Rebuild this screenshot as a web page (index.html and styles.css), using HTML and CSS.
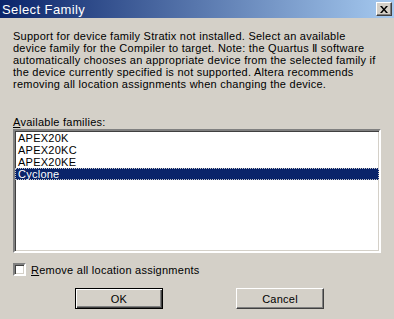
FILE: index.html
```html
<!DOCTYPE html>
<html lang="en">
<head>
    <meta charset="UTF-8">
    <title>Select Family</title>
    <link rel="stylesheet" href="styles.css">
</head>
<body>

    <div class="titlebar">
        <span class="title">Select Family</span>
        <button class="close-btn" aria-label="Close">
            <svg width="8" height="7" viewBox="0 0 8 7">
                <path d="M0 0h2l2 2.5L6 0h2L5 3.5 8 7H6L4 4.5 2 7H0l3-3.5z" fill="#000"/>
            </svg>
        </button>
    </div>

    <div class="content">
        <p class="message">Support for device family Stratix not installed. Select an available device family for the Compiler to target. Note: the Quartus &#8545; software automatically chooses an appropriate device from the selected family if the device currently specified is not supported. Altera recommends removing all location assignments when changing the device.</p>

        <div class="label"><u>A</u>vailable families:</div>
        <ul class="listbox">
            <li>APEX20K</li>
            <li>APEX20KC</li>
            <li>APEX20KE</li>
            <li class="selected"><span>Cyclone</span></li>
        </ul>

        <label class="check-row">
            <span class="checkbox"></span>
            <span><u>R</u>emove all location assignments</span>
        </label>

        <div class="buttons">
            <button class="btn default">OK</button>
            <button class="btn">Cancel</button>
        </div>
    </div>

</body>
</html>
```

FILE: styles.css
```css
/* General Styles */
body, html {
    margin: 0;
    padding: 0;
    background-color: #d4d0c8;
    font-family: "Liberation Sans", Arial, sans-serif;
    font-size: 11px;
    letter-spacing: 0.25px;
    color: #000;
}

/* Title bar */
.titlebar {
    height: 18px;
    display: flex;
    align-items: center;
    justify-content: space-between;
    padding: 0 2px 0 2px;
    background: linear-gradient(to right, #0a246a, #a6caf0);
    color: #fff;
}

.title {
    font-size: 13px;
    letter-spacing: 0.4px;
}

.close-btn {
    width: 16px;
    height: 14px;
    padding: 0;
    display: flex;
    align-items: center;
    justify-content: center;
    background-color: #d4d0c8;
    border: 1px solid;
    border-color: #fff #404040 #404040 #fff;
    box-shadow: inset -1px -1px 0 #808080;
}

/* Content */
.content {
    padding: 0 13px;
}

.message {
    margin: 12px 0 0 0;
    line-height: 12px;
}

.label {
    margin-top: 26px;
    line-height: 12px;
    height: 12px;
}

.listbox {
    list-style: none;
    margin: 1px 0 0 0;
    padding: 0;
    height: 120px;
    background-color: #fff;
    border: 2px solid;
    border-color: #808080 #fff #fff #808080;
    box-shadow: inset 1px 1px 0 #404040, inset -1px -1px 0 #d4d0c8;
}

.listbox li {
    height: 12px;
    line-height: 12px;
    padding-left: 3px;
}

.listbox li:first-child {
    margin-top: 1px;
}

.listbox .selected {
    background-color: #0a246a;
    color: #fff;
    outline: 1px dotted #c8c8c8;
    outline-offset: -1px;
}

/* Checkbox */
.check-row {
    display: flex;
    align-items: center;
    gap: 5px;
    margin-top: 10px;
    height: 13px;
}

.checkbox {
    width: 9px;
    height: 9px;
    background-color: #fff;
    border: 2px solid;
    border-color: #808080 #fff #fff #808080;
    box-shadow: inset 1px 1px 0 #404040, inset -1px -1px 0 #d4d0c8;
}

/* Buttons */
.buttons {
    display: flex;
    gap: 73px;
    padding-left: 62px;
    margin-top: 12px;
}

.btn {
    width: 88px;
    height: 21px;
    padding: 0;
    font-family: "Liberation Sans", Arial, sans-serif;
    font-size: 11px;
    letter-spacing: 0.25px;
    color: #000;
    background-color: #d4d0c8;
    border: 1px solid;
    border-color: #fff #404040 #404040 #fff;
    box-shadow: inset -1px -1px 0 #808080;
}

.btn.default {
    border: 1px solid #000;
    box-shadow: inset 1px 1px 0 #fff, inset -1px -1px 0 #404040, inset -2px -2px 0 #808080;
}
```
